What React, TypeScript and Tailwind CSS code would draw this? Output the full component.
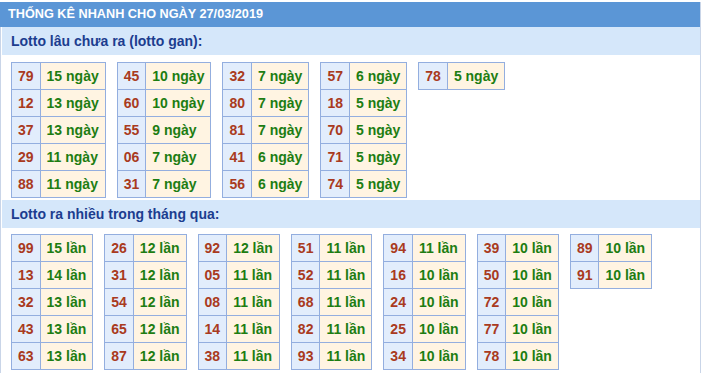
const gan: [string, string][][] = [
  [['79', '15 ngày'], ['12', '13 ngày'], ['37', '13 ngày'], ['29', '11 ngày'], ['88', '11 ngày']],
  [['45', '10 ngày'], ['60', '10 ngày'], ['55', '9 ngày'], ['06', '7 ngày'], ['31', '7 ngày']],
  [['32', '7 ngày'], ['80', '7 ngày'], ['81', '7 ngày'], ['41', '6 ngày'], ['56', '6 ngày']],
  [['57', '6 ngày'], ['18', '5 ngày'], ['70', '5 ngày'], ['71', '5 ngày'], ['74', '5 ngày']],
  [['78', '5 ngày']],
];

const nhieu: [string, string][][] = [
  [['99', '15 lần'], ['13', '14 lần'], ['32', '13 lần'], ['43', '13 lần'], ['63', '13 lần']],
  [['26', '12 lần'], ['31', '12 lần'], ['54', '12 lần'], ['65', '12 lần'], ['87', '12 lần']],
  [['92', '12 lần'], ['05', '11 lần'], ['08', '11 lần'], ['14', '11 lần'], ['38', '11 lần']],
  [['51', '11 lần'], ['52', '11 lần'], ['68', '11 lần'], ['82', '11 lần'], ['93', '11 lần']],
  [['94', '11 lần'], ['16', '10 lần'], ['24', '10 lần'], ['25', '10 lần'], ['34', '10 lần']],
  [['39', '10 lần'], ['50', '10 lần'], ['72', '10 lần'], ['77', '10 lần'], ['78', '10 lần']],
  [['89', '10 lần'], ['91', '10 lần']],
];

function LotoTable({ rows }: { rows: [string, string][] }) {
  return (
    <table className="border-collapse">
      <tbody>
        {rows.map(([n, v]) => (
          <tr key={n} className="h-[27px]">
            <td className="border border-[#93aedf] bg-[#e2edfc] px-[6px] text-[#a93a20]">{n}</td>
            <td className="border border-[#93aedf] bg-[#fff4e2] px-[6px] text-[#1d7d12]">{v}</td>
          </tr>
        ))}
      </tbody>
    </table>
  );
}

function Section({ title, tables, pad }: { title: string; tables: [string, string][][]; pad: string }) {
  return (
    <div>
      <div className="h-[28px] bg-[#d5e7fa] pl-[9px] text-[14px] font-bold leading-[28px] text-[#1c3d8f]">{title}</div>
      <div className={`flex items-start gap-[11px] pl-[9px] ${pad}`}>
        {tables.map((t, i) => (
          <LotoTable key={i} rows={t} />
        ))}
      </div>
    </div>
  );
}

export default function App() {
  return (
    <div className="bg-white pt-[2px] text-[14px] font-bold" style={{ fontFamily: '"Liberation Sans", Arial, sans-serif' }}>
      <div className="w-[701px] border-x border-[#c9d5e8] pl-px">
        <div className="-ml-[3px] h-[25px] bg-[#5b96d6] pl-[9px] text-[12.7px] font-bold leading-[25px] text-white">
          THỐNG KÊ NHANH CHO NGÀY 27/03/2019
        </div>
        <Section title="Lotto lâu chưa ra (lotto gan):" tables={gan} pad="pt-[7px] pb-[2px]" />
        <Section title="Lotto ra nhiều trong tháng qua:" tables={nhieu} pad="pt-[6px] pb-[3px]" />
      </div>
    </div>
  );
}
